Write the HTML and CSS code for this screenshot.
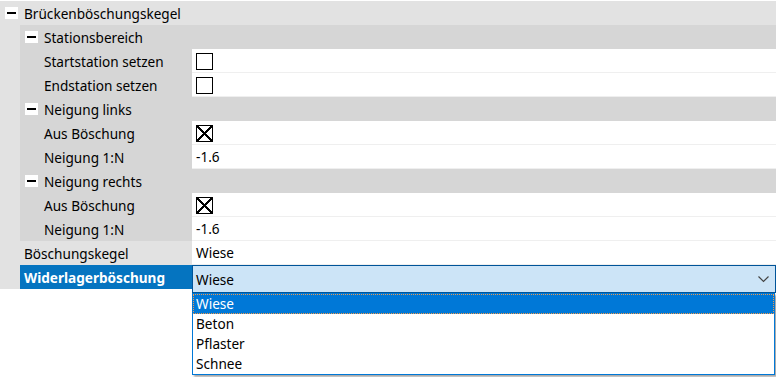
FILE: index.html
```html
<!DOCTYPE html>
<html lang="de">
<head>
  <meta charset="UTF-8" />
  <title>Eigenschaften – Brückenböschungskegel</title>
  <link rel="stylesheet" href="styles.css">
</head>
<body>
  <div class="grid">
    <div class="row cat">
      <span class="toggle"></span>Brückenböschungskegel
    </div>

    <div class="row">
      <div class="strip"></div>
      <div class="group"><span class="toggle"></span>Stationsbereich</div>
    </div>
    <div class="row">
      <div class="strip"></div>
      <div class="label">Startstation setzen</div>
      <div class="value"><span class="check"></span></div>
    </div>
    <div class="row">
      <div class="strip"></div>
      <div class="label">Endstation setzen</div>
      <div class="value"><span class="check"></span></div>
    </div>

    <div class="row">
      <div class="strip"></div>
      <div class="group"><span class="toggle"></span>Neigung links</div>
    </div>
    <div class="row">
      <div class="strip"></div>
      <div class="label">Aus Böschung</div>
      <div class="value"><span class="check checked"></span></div>
    </div>
    <div class="row">
      <div class="strip"></div>
      <div class="label">Neigung 1:N</div>
      <div class="value">-1.6</div>
    </div>

    <div class="row">
      <div class="strip"></div>
      <div class="group"><span class="toggle"></span>Neigung rechts</div>
    </div>
    <div class="row">
      <div class="strip"></div>
      <div class="label">Aus Böschung</div>
      <div class="value"><span class="check checked"></span></div>
    </div>
    <div class="row">
      <div class="strip"></div>
      <div class="label">Neigung 1:N</div>
      <div class="value">-1.6</div>
    </div>

    <div class="row">
      <div class="strip"></div>
      <div class="label top">Böschungskegel</div>
      <div class="value">Wiese</div>
    </div>
    <div class="row selected">
      <div class="strip"></div>
      <div class="label top">Widerlagerböschung</div>
      <div class="combo">
        Wiese
        <svg class="chevron" width="11" height="7" viewBox="0 0 11 7">
          <polyline points="0.5,0.5 5.5,5.5 10.5,0.5" fill="none" stroke="#444" stroke-width="1.2"/>
        </svg>
      </div>
    </div>
  </div>

  <div class="choices">
    <div class="choice active">Wiese</div>
    <div class="choice">Beton</div>
    <div class="choice">Pflaster</div>
    <div class="choice">Schnee</div>
  </div>
</body>
</html>
```

FILE: styles.css
```css
body {
  margin: 0;
  padding-top: 1px;
  font-family: "Noto Sans", "Open Sans", sans-serif;
  font-size: 13.6px;
  color: #000;
  background: #fff;
}
.grid {
  width: 776px;
}
.row {
  display: flex;
  height: 24px;
}
.cat {
  align-items: center;
  padding-left: 5px;
  background: #e2e2e2;
}
.strip {
  flex: none;
  width: 20px;
  background: #e2e2e2;
}
.group {
  flex: 1;
  display: flex;
  align-items: center;
  padding-left: 5px;
  background: #d6d6d6;
}
.toggle {
  flex: none;
  display: flex;
  align-items: center;
  justify-content: center;
  width: 13px;
  height: 12px;
  margin-right: 6px;
  background: #fff;
}
.toggle::before {
  content: "";
  width: 9px;
  height: 2px;
  background: #000;
}
.label {
  flex: none;
  box-sizing: border-box;
  width: 172px;
  display: flex;
  align-items: center;
  padding-left: 24px;
  background: #d6d6d6;
}
.label.top {
  padding-left: 4px;
  background: #e2e2e2;
}
.value {
  flex: 1;
  box-sizing: border-box;
  display: flex;
  align-items: center;
  padding-left: 4px;
  background: #fff;
  border-bottom: 1px solid #efefef;
}
.check {
  box-sizing: border-box;
  width: 17px;
  height: 17px;
  border: 1px solid #000;
  background: #fff;
  margin-top: 1px;
}
.check.checked {
  background:
    linear-gradient(45deg, transparent calc(50% - 0.8px), #000 calc(50% - 0.8px), #000 calc(50% + 0.8px), transparent calc(50% + 0.8px)),
    linear-gradient(-45deg, transparent calc(50% - 0.8px), #000 calc(50% - 0.8px), #000 calc(50% + 0.8px), transparent calc(50% + 0.8px)),
    #fff;
}
.selected {
  height: 28px;
}
.selected .strip,
.selected .label {
  height: 24px;
}
.selected .label {
  background: #0574c0;
  color: #fff;
  font-weight: bold;
}
.combo {
  flex: 1;
  box-sizing: border-box;
  display: flex;
  align-items: center;
  padding-left: 3px;
  padding-right: 6px;
  background: #cce4f7;
  border: 1px solid #005499;
}
.chevron {
  margin-left: auto;
}
.choices {
  position: absolute;
  left: 192px;
  top: 293px;
  width: 583px;
  height: 82px;
  box-sizing: border-box;
  background: #fff;
  border: 1px solid #0078d7;
  box-shadow: 2px 2px 2px rgba(0, 0, 0, 0.35);
}
.choice {
  box-sizing: border-box;
  height: 20px;
  line-height: 19px;
  padding-left: 3px;
}
.choice.active {
  background: #0078d7;
  color: #fff;
  border: 1px dotted #f29a4a;
  padding-left: 2px;
  line-height: 17px;
}
```
